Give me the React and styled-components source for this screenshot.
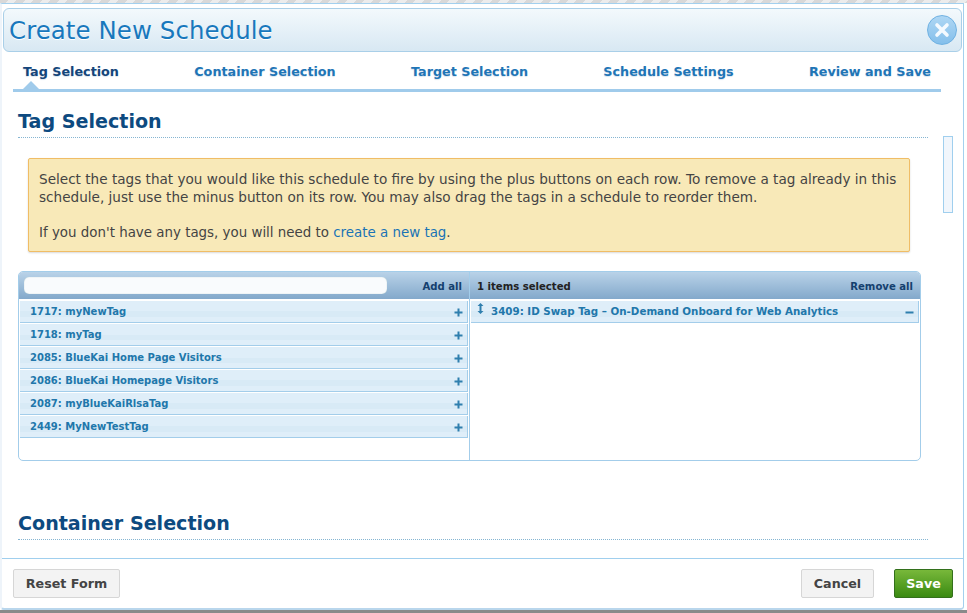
import React from "react";
import styled, { createGlobalStyle } from "styled-components";

const Global = createGlobalStyle`
  html, body { margin: 0; padding: 0; background: #fff; }
  body { font-family: "DejaVu Sans", Verdana, sans-serif; }
  * { box-sizing: border-box; }
`;

const Page = styled.div`
  width: 967px;
  height: 613px;
  overflow: hidden;
  background: #fff;
  display: flex;
  flex-direction: column;
`;
const TopEdge = styled.div`
  height: 3px;
  flex: none;
  background: repeating-linear-gradient(135deg, #d8d8d8 0 6px, #ececec 6px 12px);
`;
const Modal = styled.div`
  width: 964px;
  height: 607px;
  flex: none;
  background: #fff;
  border: 1px solid #a3d0ee;
  border-left: 2px solid #eef4fa;
  border-bottom: 2px solid #b9d6ec;
  border-radius: 0 0 4px 4px;
  padding: 4px 1px 0 1px;
  display: flex;
  flex-direction: column;
`;
const BottomEdge = styled.div`
  height: 3px;
  flex: none;
  background: #8a8a8a;
`;
const Header = styled.header`
  height: 44px;
  flex: none;
  border: 1px solid #a9cfe8;
  border-radius: 6px;
  background: linear-gradient(#f3f9fc, #d8e8f3);
  display: flex;
  align-items: center;
  justify-content: space-between;
  padding: 0 4px 0 5px;
`;
const Title = styled.h1`
  margin: 0;
  font-size: 24.4px;
  font-weight: 400;
  letter-spacing: 0.1px;
  color: #1878bd;
  text-shadow: 0 1px 0 #fff;
`;
const CloseButton = styled.button`
  width: 30px;
  height: 30px;
  padding: 0;
  border: 1px solid #6fb1e2;
  border-radius: 50%;
  background: linear-gradient(#aed7f4, #84bfeb);
  display: flex;
  align-items: center;
  justify-content: center;
`;
const Tabs = styled.nav`
  margin: 0 21px 0 10px;
  height: 40px;
  flex: none;
  border-bottom: 3px solid #a0cbeb;
  display: flex;
  justify-content: space-between;
  padding: 10px 10px 0 10px;
`;
const Tab = styled.a`
  position: relative;
  font-size: 12.75px;
  font-weight: 700;
  line-height: 20px;
  color: ${(p) => (p.$active ? "#14457a" : "#1f75b6")};
  text-shadow: 0 1px 1px #d9e6f0;
  ${(p) =>
    p.$active &&
    `&::after {
      content: "";
      position: absolute;
      left: 0;
      bottom: 0;
      width: 0;
      height: 0;
      border-left: 8px solid transparent;
      border-right: 8px solid transparent;
      border-bottom: 8px solid #a0cbeb;
    }`}
`;
const Body = styled.div`
  flex: 1;
  min-height: 0;
  overflow: hidden;
  display: flex;
`;
const Content = styled.main`
  width: 925px;
  flex: none;
  padding: 17px 0 0 15px;
`;
const Heading = styled.h2`
  margin: ${(p) => (p.$spaced ? "50px 0 0" : "0")};
  height: 29px;
  font-size: 19.1px;
  line-height: 26px;
  font-weight: 700;
  color: #0d4a80;
  border-bottom: 1px dotted #85b5d2;
`;
const ScrollTrack = styled.div`
  flex: none;
  padding: 44px 0 0 15px;
`;
const ScrollThumb = styled.div`
  width: 10px;
  height: 77px;
  background: #f1f6fc;
  border: 1px solid #a0cfee;
`;
const Notice = styled.div`
  margin: 20px 18px 0 10px;
  height: 94px;
  padding: 11px 8px 0 10px;
  background: #f8e9b8;
  border: 1px solid #f0bd66;
  border-radius: 2px;
  box-shadow: 0 1px 2px #d9d9d9;
  font-size: 13.6px;
  line-height: 18px;
  color: #444;
`;
const NoticeGap = styled.p`
  margin: 0 0 18px;
`;
const NoticeLast = styled.p`
  margin: 0;
  font-size: 13.4px;
`;
const InlineLink = styled.a`
  color: #1a73b5;
`;
const Picker = styled.section`
  margin: 19px 7px 0 0;
  height: 190px;
  border: 1px solid #a3cdea;
  border-radius: 5px;
  overflow: hidden;
  display: grid;
  grid-template-columns: 451px 1fr;
`;
const Column = styled.div`
  min-width: 0;
  border-right: ${(p) => (p.$divider ? "1px solid #a3cdea" : "0")};
`;
const ColumnHead = styled.div`
  height: 28px;
  padding: 1px 7px 0 5px;
  background: linear-gradient(#b9d2e8, #83a9cb);
  border-bottom: 1px solid #fff;
  display: flex;
  align-items: center;
  justify-content: space-between;
  font-size: 10.1px;
  font-weight: 700;
  color: #14406e;
`;
const Search = styled.input`
  width: 363px;
  height: 17px;
  margin-top: -1px;
  border: 0;
  border-radius: 5px;
  background: #f9fbfd;
  box-shadow: inset 0 0 1px #9bb;
  padding: 0;
  outline: none;
`;
const Count = styled.span`
  color: #222;
  padding-left: 2px;
`;
const Row = styled.div`
  height: 22px;
  margin: 1px 1px 0 1px;
  padding: 0 4px 0 10px;
  border-bottom: 1px solid #a3cdea;
  border-right: 1px solid #a3cdea;
  background: linear-gradient(#dfeef9 0 50%, #d8eaf6 50% 75%, #dfeef9 75%);
  display: flex;
  align-items: center;
  justify-content: space-between;
  font-size: 10px;
  font-weight: 700;
  color: #2177ab;
`;
const SelectedRow = styled(Row)`
  padding: 0 4px 1px 6px;
  justify-content: flex-start;
  gap: 7px;
  font-size: 10.3px;
`;
const RowText = styled.span`
  white-space: nowrap;
`;
const RowAction = styled.svg`
  width: 9px;
  height: 9px;
  flex: none;
  margin-left: auto;
  margin-top: 2px;
`;
const DragIcon = styled.svg`
  width: 7px;
  height: 11px;
  flex: none;
  margin-top: -5px;
`;
const Footer = styled.footer`
  height: 50px;
  flex: none;
  margin: 0 -1px;
  border-top: 1px solid #a0cfee;
  padding: 10px 10px 0 11px;
  display: flex;
  gap: 20px;
`;
const Button = styled.button`
  height: 29px;
  width: ${(p) => p.$w}px;
  margin-left: ${(p) => (p.$push ? "auto" : "0")};
  padding: 0;
  font: 700 12.7px "DejaVu Sans", sans-serif;
  color: ${(p) => (p.$primary ? "#fff" : "#444")};
  border: 1px solid ${(p) => (p.$primary ? "#33701c" : "#d6d6d6")};
  border-radius: 2px;
  background: ${(p) => (p.$primary ? "linear-gradient(#78b83a, #3a8a12)" : "#f3f3f3")};
`;

const tags = [
  "1717: myNewTag",
  "1718: myTag",
  "2085: BlueKai Home Page Visitors",
  "2086: BlueKai Homepage Visitors",
  "2087: myBlueKaiRlsaTag",
  "2449: MyNewTestTag",
];
const tabs = ["Tag Selection", "Container Selection", "Target Selection", "Schedule Settings", "Review and Save"];

export default function App() {
  return (
    <Page>
      <Global />
      <TopEdge />
      <Modal>
        <Header>
          <Title>Create New Schedule</Title>
          <CloseButton aria-label="Close">
            <svg width="16" height="16" viewBox="0 0 16 16">
              <path d="M3 3 L13 13 M13 3 L3 13" stroke="#f4faff" strokeWidth="3.6" strokeLinecap="round" />
            </svg>
          </CloseButton>
        </Header>
        <Tabs>
          {tabs.map((t, i) => (
            <Tab key={t} $active={i === 0}>{t}</Tab>
          ))}
        </Tabs>
        <Body>
          <Content>
            <Heading>Tag Selection</Heading>
            <Notice>
              <NoticeGap>
                Select the tags that you would like this schedule to fire by using the plus buttons on each row. To remove a tag already in this schedule, just use the minus button on its row. You may also drag the tags in a schedule to reorder them.
              </NoticeGap>
              <NoticeLast>
                If you don't have any tags, you will need to <InlineLink>create a new tag</InlineLink>.
              </NoticeLast>
            </Notice>
            <Picker>
              <Column $divider>
                <ColumnHead>
                  <Search />
                  <span>Add all</span>
                </ColumnHead>
                {tags.map((t) => (
                  <Row key={t}>
                    <RowText>{t}</RowText>
                    <RowAction viewBox="0 0 9 9">
                      <path d="M4.5 0.5v8M0.5 4.5h8" stroke="#2f7fae" strokeWidth="2" />
                    </RowAction>
                  </Row>
                ))}
              </Column>
              <Column>
                <ColumnHead>
                  <Count>1 items selected</Count>
                  <span>Remove all</span>
                </ColumnHead>
                <SelectedRow>
                  <DragIcon viewBox="0 0 7 11">
                    <path d="M3.5 0L6.5 3H4.5V8H6.5L3.5 11L0.5 8H2.5V3H0.5Z" fill="#2f7fae" />
                  </DragIcon>
                  <RowText>3409: ID Swap Tag – On-Demand Onboard for Web Analytics</RowText>
                  <RowAction viewBox="0 0 9 9">
                    <path d="M0.5 4.5h8" stroke="#2f7fae" strokeWidth="2" />
                  </RowAction>
                </SelectedRow>
              </Column>
            </Picker>
            <Heading $spaced>Container Selection</Heading>
          </Content>
          <ScrollTrack>
            <ScrollThumb />
          </ScrollTrack>
        </Body>
        <Footer>
          <Button $w={107}>Reset Form</Button>
          <Button $w={73} $push>Cancel</Button>
          <Button $w={59} $primary>Save</Button>
        </Footer>
      </Modal>
      <BottomEdge />
    </Page>
  );
}
